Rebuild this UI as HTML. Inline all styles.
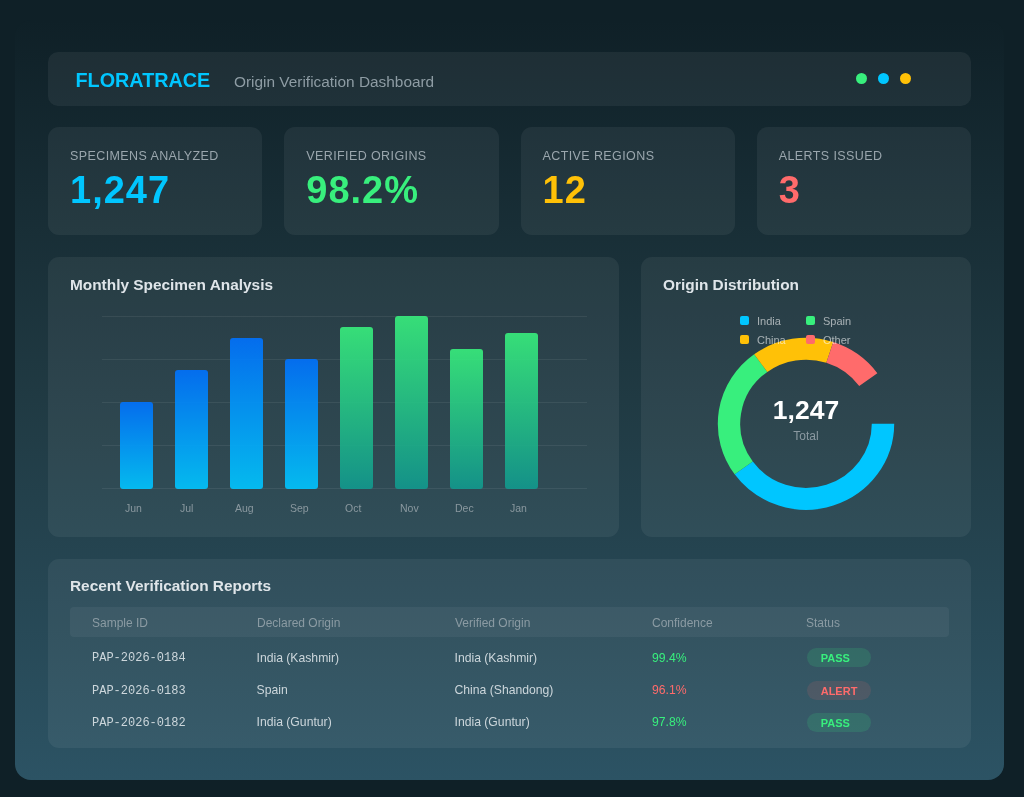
<!DOCTYPE html>
<html>
<head>
<meta charset="utf-8">
<style>
*{margin:0;padding:0;box-sizing:border-box}
html,body{width:1024px;height:797px;overflow:hidden;background:#0f2027;font-family:"Liberation Sans",sans-serif}
.abs{position:absolute}
.t{position:absolute;white-space:nowrap}
#wrap{position:absolute;left:15px;top:20px;width:989px;height:760px;border-radius:16px;background:linear-gradient(180deg,#0f2027 0%,#203a43 50%,#2c5364 100%)}
.card{position:absolute;background:rgba(255,255,255,0.06);border-radius:11px}
.dot{position:absolute;width:11px;height:11px;border-radius:50%}
.lbl{font-size:12.5px;line-height:12.5px;color:#9aa6ad;letter-spacing:0.4px}
.val{font-size:38px;line-height:38px;font-weight:700;letter-spacing:1px}
.ttl{font-size:15.4px;line-height:15.4px;font-weight:700;color:#dfe5e9}
.grid{position:absolute;left:102px;width:485px;height:1px;background:rgba(255,255,255,0.07)}
.bar{position:absolute;width:33px;border-radius:3px}
.blue{background:linear-gradient(180deg,#0072ff,#00c6ff);opacity:0.9}
.green{background:linear-gradient(180deg,#38ef7d,#11998e);opacity:0.9}
.mlab{font-size:10.5px;line-height:10.5px;color:#8a989f}
.th{font-size:12px;line-height:12px;color:#8b9ba3}
.td{font-size:12.2px;line-height:12.2px;color:#ccd6db}
.mono{font-family:"Liberation Mono",monospace;font-size:12px;line-height:12px;color:#ccd6db}
.badge{position:absolute;width:64px;height:19px;border-radius:10px;font-size:11px;font-weight:700;padding-left:13.7px;line-height:20.6px}
.pass{background:rgba(56,239,125,0.14);color:#38ef7d}
.alert{background:rgba(255,107,107,0.12);color:#ff6b6b}
.leg{position:absolute;width:9px;height:9px;border-radius:2px}
.legt{font-size:11px;line-height:11px;color:rgba(255,255,255,0.58)}
</style>
</head>
<body>
<div id="root" style="position:absolute;left:0;top:0;width:1024px;height:797px;filter:blur(0.45px)">
<div id="wrap"></div>

<!-- header -->
<div class="card" style="left:48px;top:51.6px;width:923px;height:54.5px;border-radius:10px"></div>
<div class="t" style="left:75.5px;top:71px;font-size:19.8px;line-height:19.8px;font-weight:700;letter-spacing:0px;color:#00c6ff">FLORATRACE</div>
<div class="t" style="left:234px;top:73.9px;font-size:15.4px;line-height:15.4px;color:#8e9ca4">Origin Verification Dashboard</div>
<div class="dot" style="left:855.5px;top:73px;background:#38ef7d"></div>
<div class="dot" style="left:877.5px;top:73px;background:#00c6ff"></div>
<div class="dot" style="left:899.5px;top:73px;background:#ffc107"></div>

<!-- stat cards -->
<div class="card" style="left:48px;top:127px;width:214.25px;height:108px"></div>
<div class="card" style="left:284.25px;top:127px;width:214.25px;height:108px"></div>
<div class="card" style="left:520.5px;top:127px;width:214.25px;height:108px"></div>
<div class="card" style="left:756.75px;top:127px;width:214.25px;height:108px"></div>
<div class="t lbl" style="left:70px;top:150px">SPECIMENS ANALYZED</div>
<div class="t lbl" style="left:306.25px;top:150px">VERIFIED ORIGINS</div>
<div class="t lbl" style="left:542.5px;top:150px">ACTIVE REGIONS</div>
<div class="t lbl" style="left:778.75px;top:150px">ALERTS ISSUED</div>
<div class="t val" style="left:70px;top:170.9px;color:#00c6ff">1,247</div>
<div class="t val" style="left:306.25px;top:170.9px;color:#38ef7d">98.2%</div>
<div class="t val" style="left:542.5px;top:170.9px;color:#ffc107">12</div>
<div class="t val" style="left:778.75px;top:170.9px;color:#ff6b6b">3</div>

<!-- charts -->
<div class="card" style="left:48px;top:257px;width:571.3px;height:280px"></div>
<div class="card" style="left:641.3px;top:257px;width:329.7px;height:280px"></div>
<div class="t ttl" style="left:70px;top:276.5px">Monthly Specimen Analysis</div>
<div class="t ttl" style="left:663px;top:276.5px">Origin Distribution</div>

<div class="grid" style="top:316px"></div>
<div class="grid" style="top:359px"></div>
<div class="grid" style="top:402px"></div>
<div class="grid" style="top:445px"></div>
<div class="grid" style="top:488px"></div>

<div class="bar blue" style="left:119.5px;top:402px;height:87px"></div>
<div class="bar blue" style="left:174.5px;top:370px;height:119px"></div>
<div class="bar blue" style="left:229.5px;top:337.5px;height:151.5px"></div>
<div class="bar blue" style="left:284.5px;top:359px;height:130px"></div>
<div class="bar green" style="left:339.5px;top:327px;height:162px"></div>
<div class="bar green" style="left:394.5px;top:316px;height:173px"></div>
<div class="bar green" style="left:449.5px;top:348.5px;height:140.5px"></div>
<div class="bar green" style="left:504.5px;top:332.5px;height:156.5px"></div>

<div class="t mlab" style="left:125px;top:503.4px">Jun</div>
<div class="t mlab" style="left:180px;top:503.4px">Jul</div>
<div class="t mlab" style="left:235px;top:503.4px">Aug</div>
<div class="t mlab" style="left:290px;top:503.4px">Sep</div>
<div class="t mlab" style="left:345px;top:503.4px">Oct</div>
<div class="t mlab" style="left:400px;top:503.4px">Nov</div>
<div class="t mlab" style="left:455px;top:503.4px">Dec</div>
<div class="t mlab" style="left:510px;top:503.4px">Jan</div>

<!-- donut -->

<svg class="abs" style="left:641px;top:257px" width="329" height="280" viewBox="641 257 329 280">
<g fill="none" stroke-width="22.4" transform="translate(806 423.8) scale(1 0.975)">
<path stroke="#00c6ff" d="M77.00 0.00A77 77 0 0 1 -62.29 45.26"/>
<path stroke="#38ef7d" d="M-62.29 45.26A77 77 0 0 1 -45.26 -62.29"/>
<path stroke="#ffc107" d="M-45.26 -62.29A77 77 0 0 1 23.79 -73.23"/>
<path stroke="#ff6b6b" d="M23.79 -73.23A77 77 0 0 1 62.29 -45.26"/>
</g>
</svg>
<div class="leg" style="left:740px;top:316px;background:#00c6ff"></div>
<div class="t legt" style="left:757px;top:315.5px">India</div>
<div class="leg" style="left:806px;top:316px;background:#38ef7d"></div>
<div class="t legt" style="left:823px;top:315.5px">Spain</div>
<div class="leg" style="left:740px;top:335px;background:#ffc107"></div>
<div class="t legt" style="left:757px;top:334.5px">China</div>
<div class="leg" style="left:806px;top:335px;background:#ff6b6b"></div>
<div class="t legt" style="left:823px;top:334.5px">Other</div>

<div class="t" style="left:740px;width:132px;text-align:center;top:396.6px;font-size:26.5px;line-height:26.5px;font-weight:700;color:#ffffff">1,247</div>
<div class="t" style="left:740px;width:132px;text-align:center;top:429.7px;font-size:12px;line-height:12px;color:#8b99a1">Total</div>

<!-- table -->
<div class="card" style="left:48px;top:559px;width:923px;height:188.7px"></div>
<div class="t ttl" style="left:70px;top:578.3px">Recent Verification Reports</div>
<div class="abs" style="left:70px;top:607px;width:879px;height:30px;border-radius:4px;background:rgba(255,255,255,0.05)"></div>
<div class="t th" style="left:92px;top:616.6px">Sample ID</div>
<div class="t th" style="left:257px;top:616.6px">Declared Origin</div>
<div class="t th" style="left:455px;top:616.6px">Verified Origin</div>
<div class="t th" style="left:652px;top:616.6px">Confidence</div>
<div class="t th" style="left:806px;top:616.6px">Status</div>

<div class="t mono" style="left:92px;top:652.2px">PAP-2026-0184</div>
<div class="t td" style="left:256.5px;top:651.6px">India (Kashmir)</div>
<div class="t td" style="left:454.5px;top:651.6px">India (Kashmir)</div>
<div class="t td" style="left:652px;top:651.6px;color:#38ef7d">99.4%</div>
<div class="badge pass" style="left:807px;top:648.4px">PASS</div>

<div class="t mono" style="left:92px;top:684.6px">PAP-2026-0183</div>
<div class="t td" style="left:256.5px;top:684px">Spain</div>
<div class="t td" style="left:454.5px;top:684px">China (Shandong)</div>
<div class="t td" style="left:652px;top:684px;color:#ff6b6b">96.1%</div>
<div class="badge alert" style="left:807px;top:680.8px">ALERT</div>

<div class="t mono" style="left:92px;top:717px">PAP-2026-0182</div>
<div class="t td" style="left:256.5px;top:716.4px">India (Guntur)</div>
<div class="t td" style="left:454.5px;top:716.4px">India (Guntur)</div>
<div class="t td" style="left:652px;top:716.4px;color:#38ef7d">97.8%</div>
<div class="badge pass" style="left:807px;top:713.2px">PASS</div>
</div>
</body>
</html>
